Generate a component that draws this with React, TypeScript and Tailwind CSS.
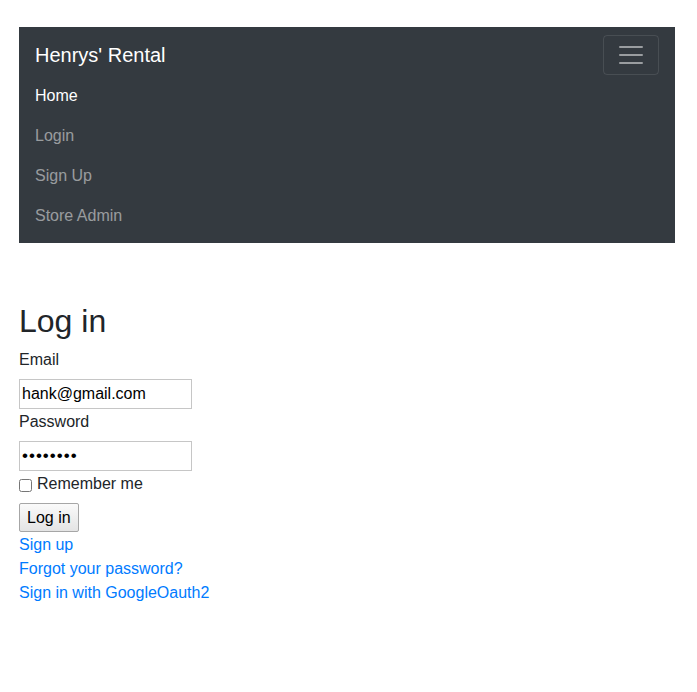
export default function App() {
  return (
    <div className="min-h-[692px] bg-white pt-[27px] font-['Liberation_Sans',Arial,sans-serif] text-[16px] leading-6 text-[#212529]">
      {/* NAVBAR */}
      <nav className="mx-[19px] w-[656px] bg-[#343a40] px-4 py-2">
        <div className="flex h-10 items-center justify-between">
          <a href="#" className="text-[20px] leading-[30px] text-white">
            Henrys' Rental
          </a>
          <button className="flex h-10 w-14 items-center justify-center rounded border border-white/10">
            <svg width="30" height="30" viewBox="0 0 30 30">
              <path
                d="M4 7h22M4 15h22M4 23h22"
                stroke="rgba(255,255,255,0.5)"
                strokeWidth="2"
                strokeLinecap="round"
              />
            </svg>
          </button>
        </div>
        <ul className="flex flex-col">
          <li className="pt-[9px] pb-[7px] text-white">Home</li>
          <li className="pt-[9px] pb-[7px] text-white/50">Login</li>
          <li className="pt-[9px] pb-[7px] text-white/50">Sign Up</li>
          <li className="pt-[9px] pb-[7px] text-white/50">Store Admin</li>
        </ul>
      </nav>

      {/* LOGIN FORM */}
      <div className="mx-[19px] mt-[58px]">
        <h2 className="mb-[7px] pt-[1px] text-[32px] leading-[38px] font-medium">Log in</h2>
        <div className="flex flex-col items-start">
          <label className="mb-[7px] pt-[1px]">Email</label>
          <input
            type="email"
            defaultValue="hank@gmail.com"
            className="h-[30px] w-[173px] border border-[#c6c6c6] px-[2px] text-[16px] text-black outline-none"
          />
          <label className="mb-[7px] pt-[1px]">Password</label>
          <input
            type="password"
            defaultValue="password"
            className="h-[30px] w-[173px] border border-[#c6c6c6] px-[2px] text-[17px] tracking-[1px] text-black outline-none"
          />
          <label className="flex items-start gap-[5px] pt-[1px]">
            <input type="checkbox" className="mt-[7px] h-[13px] w-[13px]" />
            Remember me
          </label>
          <button className="mt-[7px] h-[29px] rounded-[2px] border border-[#a6a6a6] bg-gradient-to-b from-[#fafafa] to-[#e4e4e4] px-[7px] text-[16px] text-black">
            Log in
          </button>
          <div className="flex flex-col pt-[1px]">
            <a href="#" className="text-[#007bff]">Sign up</a>
            <a href="#" className="text-[#007bff]">Forgot your password?</a>
            <a href="#" className="text-[#007bff]">Sign in with GoogleOauth2</a>
          </div>
        </div>
      </div>
    </div>
  );
}
